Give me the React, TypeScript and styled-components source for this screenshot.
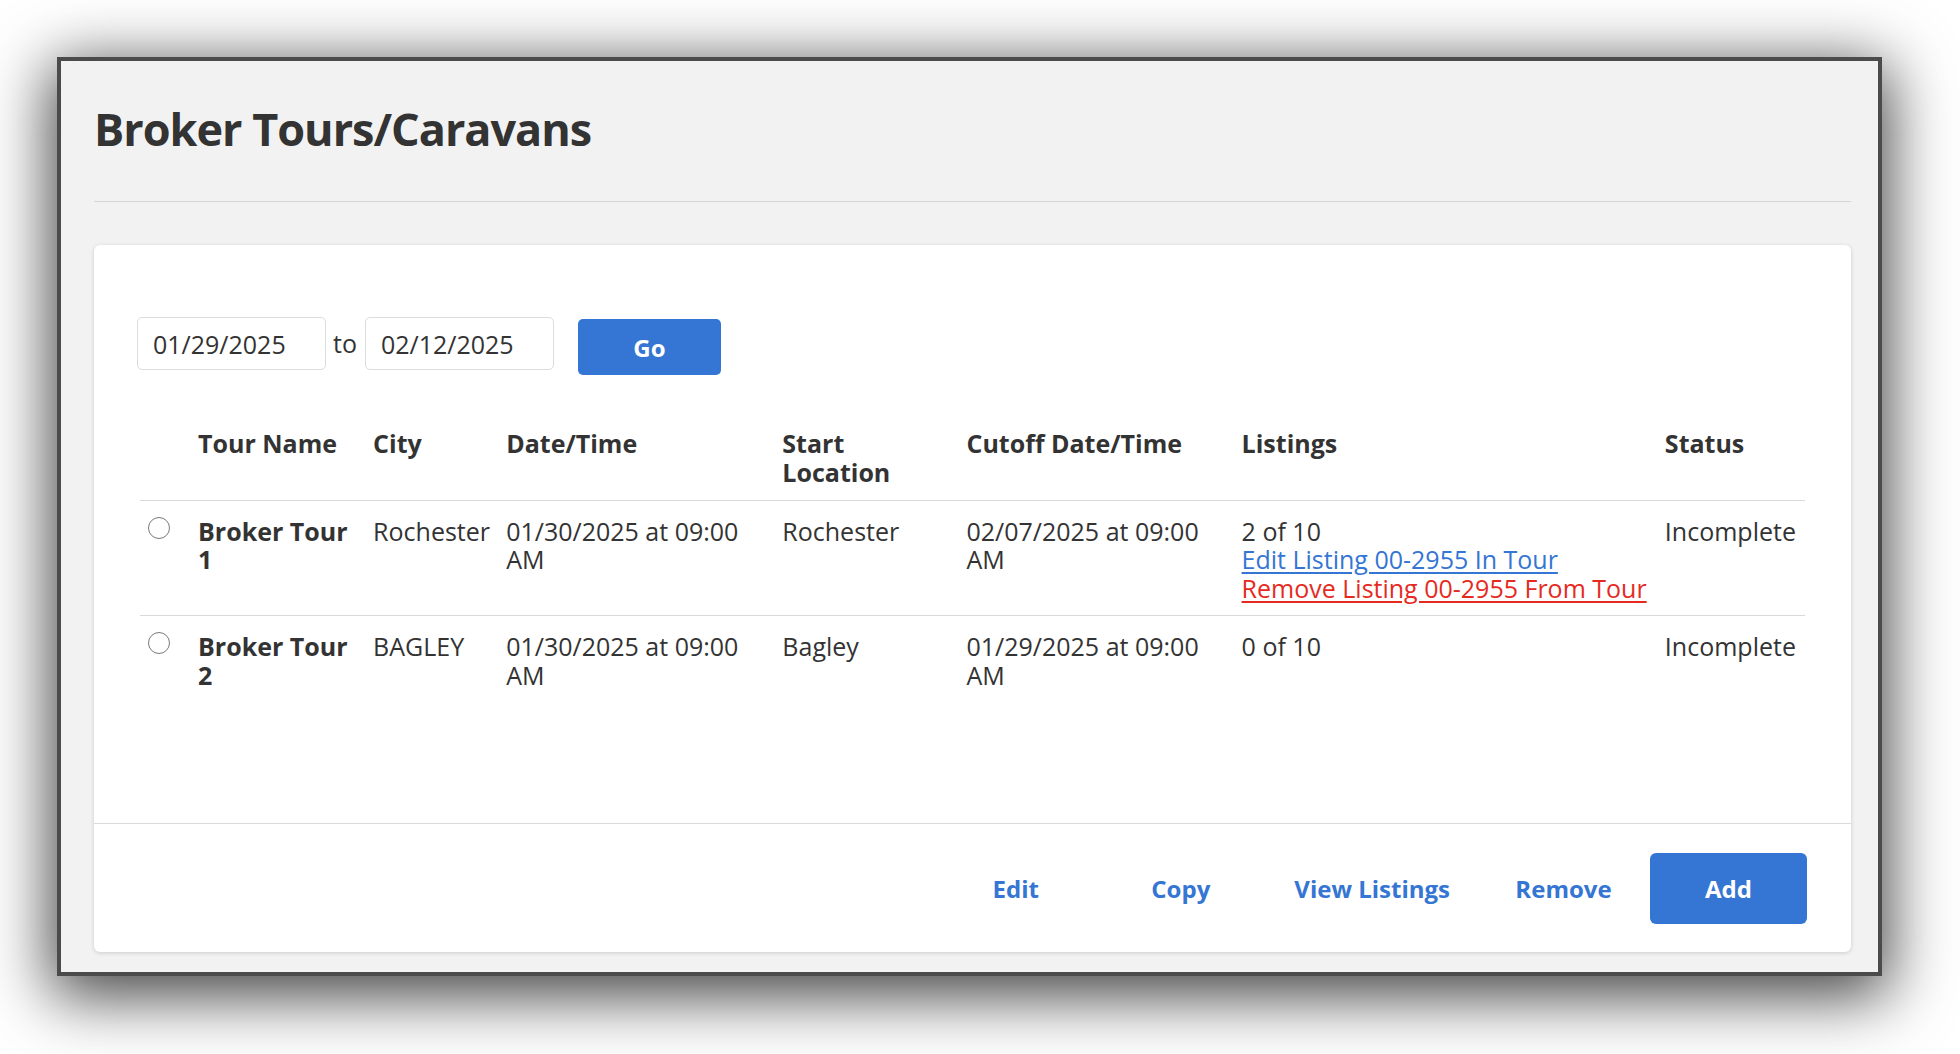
import React from "react";
import styled, { createGlobalStyle } from "styled-components";

const Global = createGlobalStyle`
  html, body { margin: 0; padding: 0; background: #ffffff; }
  body { font-family: "Open Sans", "Liberation Sans", sans-serif; color: #333333; }
  * { box-sizing: border-box; }
`;

const Stage = styled.div`
  width: 1960px;
  height: 1054px;
  padding: 57px 0 0 57px;
  overflow: hidden;
`;

const Frame = styled.div`
  width: 1825px;
  border: 4px solid #4b4b4b;
  background: #f2f2f2;
  box-shadow: 0 14px 60px 6px rgba(0, 0, 0, 0.74);
  padding: 40px 27px 20px 33px;
`;

const Title = styled.h1`
  margin: 0;
  font-size: 45px;
  line-height: 55px;
  letter-spacing: -1px;
  font-weight: 700;
  color: #333333;
`;

const Divider = styled.hr`
  margin: 45px 0 0;
  border: 0;
  border-top: 1px solid #d6d6d6;
  height: 0;
`;

const Card = styled.section`
  margin-top: 43px;
  background: #ffffff;
  border-radius: 6px;
  box-shadow: 0 1px 4px rgba(0, 0, 0, 0.16);
`;

const CardBody = styled.div`
  padding: 72px 43px 121px 43px;
`;

const FilterBar = styled.div`
  display: flex;
  align-items: flex-start;
`;

const DateInput = styled.input`
  width: 189px;
  height: 53px;
  border: 1px solid #dcdcdc;
  border-radius: 5px;
  padding: 0 15px;
  font-family: "Open Sans", "Liberation Sans", sans-serif;
  font-size: 25px;
  color: #333333;
  background: #ffffff;
  outline: none;
`;

const ToLabel = styled.span`
  font-size: 25px;
  line-height: 53px;
  margin: 0 8px 0 7px;
  color: #333333;
`;

const PrimaryButton = styled.button<{ $w: number; $h: number }>`
  width: ${(p) => p.$w}px;
  height: ${(p) => p.$h}px;
  border: 0;
  border-radius: 6px;
  background: #3575d3;
  color: #ffffff;
  font-family: "Open Sans", "Liberation Sans", sans-serif;
  font-weight: 700;
  font-size: 24px;
  cursor: pointer;
`;

const GoButton = styled(PrimaryButton)`
  margin: 2px 0 0 24px;
  border-radius: 5px;
`;

const Table = styled.table`
  width: calc(100% - 6px);
  margin: 38px 3px 0;
  border-collapse: collapse;
  table-layout: fixed;
  font-size: 25px;
  line-height: 28.8px;
`;

const Col = styled.col<{ $w: number }>`
  width: ${(p) => p.$w}px;
`;

const Th = styled.th`
  text-align: left;
  vertical-align: top;
  font-weight: 700;
  padding: 16px 8px 13px;
  border-bottom: 1px solid #d9d9d9;
  color: #333333;
`;

const Tr = styled.tr`
  & + & > td {
    border-top: 1px solid #d9d9d9;
  }
`;

const Td = styled.td<{ $bold?: boolean }>`
  vertical-align: top;
  padding: 16px 8px 12px;
  font-weight: ${(p) => (p.$bold ? 700 : 400)};
  color: #333333;
  white-space: normal;
`;

const Radio = styled.input`
  appearance: none;
  -webkit-appearance: none;
  display: block;
  width: 22px;
  height: 22px;
  margin: 0;
  border: 1.5px solid #7a7a7a;
  border-radius: 50%;
  background: #ffffff;
`;

const ListingLink = styled.a<{ $danger?: boolean }>`
  display: block;
  white-space: nowrap;
  color: ${(p) => (p.$danger ? "#e52b1f" : "#3575d3")};
  text-decoration: underline;
  text-underline-offset: 3px;
`;

const Footer = styled.div`
  display: flex;
  justify-content: flex-end;
  gap: 8px;
  border-top: 1px solid #dadada;
  padding: 29px 44px 28px;
`;

const LinkButton = styled.button`
  min-width: 157px;
  height: 71px;
  padding: 0 27px;
  border: 0;
  background: transparent;
  color: #3575d3;
  font-family: "Open Sans", "Liberation Sans", sans-serif;
  font-weight: 700;
  font-size: 24px;
  cursor: pointer;
`;

type Tour = {
  name: string;
  city: string;
  date: string;
  start: string;
  cutoff: string;
  listings: string;
  links: boolean;
  status: string;
};

const tours: Tour[] = [
  {
    name: "Broker Tour 1",
    city: "Rochester",
    date: "01/30/2025 at 09:00 AM",
    start: "Rochester",
    cutoff: "02/07/2025 at 09:00 AM",
    listings: "2 of 10",
    links: true,
    status: "Incomplete",
  },
  {
    name: "Broker Tour 2",
    city: "BAGLEY",
    date: "01/30/2025 at 09:00 AM",
    start: "Bagley",
    cutoff: "01/29/2025 at 09:00 AM",
    listings: "0 of 10",
    links: false,
    status: "Incomplete",
  },
];

export default function App() {
  return (
    <>
      <Global />
      <Stage>
        <Frame>
          <Title>Broker Tours/Caravans</Title>
          <Divider />
          <Card>
            <CardBody>
              <FilterBar>
                <DateInput readOnly value="01/29/2025" />
                <ToLabel>to</ToLabel>
                <DateInput readOnly value="02/12/2025" />
                <GoButton $w={143} $h={56}>Go</GoButton>
              </FilterBar>
              <Table>
                <colgroup>
                  <Col $w={50} />
                  <Col $w={175} />
                  <Col $w={133} />
                  <Col $w={276} />
                  <Col $w={184} />
                  <Col $w={275} />
                  <Col $w={423} />
                  <Col $w={148} />
                </colgroup>
                <thead>
                  <tr>
                    <Th />
                    <Th>Tour Name</Th>
                    <Th>City</Th>
                    <Th>Date/Time</Th>
                    <Th>Start Location</Th>
                    <Th>Cutoff Date/Time</Th>
                    <Th>Listings</Th>
                    <Th>Status</Th>
                  </tr>
                </thead>
                <tbody>
                  {tours.map((t) => (
                    <Tr key={t.name}>
                      <Td>
                        <Radio type="radio" name="tour" />
                      </Td>
                      <Td $bold>{t.name}</Td>
                      <Td>{t.city}</Td>
                      <Td>{t.date}</Td>
                      <Td>{t.start}</Td>
                      <Td>{t.cutoff}</Td>
                      <Td>
                        {t.listings}
                        {t.links && (
                          <>
                            <ListingLink href="#">Edit Listing 00-2955 In Tour</ListingLink>
                            <ListingLink href="#" $danger>
                              Remove Listing 00-2955 From Tour
                            </ListingLink>
                          </>
                        )}
                      </Td>
                      <Td>{t.status}</Td>
                    </Tr>
                  ))}
                </tbody>
              </Table>
            </CardBody>
            <Footer>
              <LinkButton>Edit</LinkButton>
              <LinkButton>Copy</LinkButton>
              <LinkButton>View Listings</LinkButton>
              <LinkButton>Remove</LinkButton>
              <PrimaryButton $w={157} $h={71}>Add</PrimaryButton>
            </Footer>
          </Card>
        </Frame>
      </Stage>
    </>
  );
}
